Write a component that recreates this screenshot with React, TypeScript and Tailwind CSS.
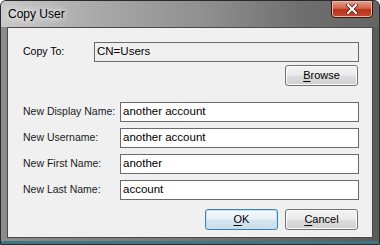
import React from 'react';

const font = { fontFamily: '"Liberation Sans", Arial, sans-serif' };

const Mn = ({ c, rest }: { c: string; rest: string }) => (
  <span>
    <span className="underline underline-offset-2">{c}</span>
    {rest}
  </span>
);

const Button = ({ children, primary }: { children: React.ReactNode; primary?: boolean }) => (
  <div
    className={
      'w-[73px] h-[21px] rounded-[3px] border flex items-center justify-center text-[11px] text-black ' +
      (primary
        ? 'border-[#3c7fb1] shadow-[inset_0_0_0_1px_#bfe4f7] bg-[linear-gradient(#f4f9fc_0%,#e8f1f7_48%,#d6e6f1_52%,#cbdce8_100%)]'
        : 'border-[#707070] shadow-[inset_0_0_0_1px_#fcfcfc] bg-[linear-gradient(#f2f2f2_0%,#ebebeb_48%,#dddddd_52%,#cfcfcf_100%)]')
    }
  >
    {children}
  </div>
);

const Field = ({ value, readOnly }: { value: string; readOnly?: boolean }) => (
  <div
    className={
      'flex-1 h-[20px] border border-[#6a6a6a] flex items-center pl-[2px] text-[11.5px] text-black ' +
      (readOnly ? 'bg-[#f0f0f0]' : 'bg-white')
    }
  >
    {value}
  </div>
);

const rows = [
  { label: 'New Display Name:', value: 'another account' },
  { label: 'New Username:', value: 'another account' },
  { label: 'New First Name:', value: 'another' },
  { label: 'New Last Name:', value: 'account' },
];

export default function App() {
  return (
    <div
      style={font}
      className="w-[380px] h-[245px] overflow-hidden bg-[linear-gradient(90deg,#8c8c8c_0%,#7a7a7a_40%,#6a6a6a_70%,#5b5b5b_100%)] rounded-t-[6px] border border-[#2a2a2a] flex flex-col relative"
    >
      {/* title bar */}
      <div className="h-[26px] flex items-center pl-[7px] bg-[linear-gradient(90deg,#c9c9c9_0%,#a9a9a9_25%,#8e8e8e_55%,#6e6e6e_80%,#656565_100%)]">
        <span className="text-[12px] text-black" style={{ textShadow: '0 0 6px #fff, 0 0 10px #fff' }}>
          Copy User
        </span>
      </div>
      <div className="absolute right-[6px] top-[-1px] w-[42px] h-[18px] rounded-b-[4px] border border-[#3b1410] bg-[linear-gradient(#e8a190_0%,#d0644e_45%,#b8331b_55%,#c5492e_100%)] shadow-[inset_0_0_0_1px_#f0b8a8] flex items-center justify-center">
        <svg width="12" height="10" viewBox="0 0 12 10">
          <path d="M2 1 L10 9 M10 1 L2 9" stroke="#3a1a14" strokeWidth="3.4" strokeLinecap="square" />
          <path d="M2 1 L10 9 M10 1 L2 9" stroke="#ffffff" strokeWidth="2" strokeLinecap="square" />
        </svg>
      </div>

      {/* client area */}
      <div className="flex-1 mx-[6px] mb-[6px] border border-[#4a4a4a] bg-[#f0f0f0] pl-[15px] pr-[13px] flex flex-col text-[10.5px] text-black">
        <div className="flex items-center mt-[14px]">
          <span className="w-[71px] shrink-0 whitespace-nowrap">Copy To:</span>
          <Field value="CN=Users" readOnly />
        </div>
        <div className="flex justify-end mt-[3px] pr-[1px]">
          <Button>
            <Mn c="B" rest="rowse" />
          </Button>
        </div>
        <div className="flex flex-col gap-[6px] mt-[16px]">
          {rows.map((r) => (
            <div key={r.label} className="flex items-center">
              <span className="w-[97px] shrink-0 whitespace-nowrap text-[#1a1a1a]">{r.label}</span>
              <Field value={r.value} />
            </div>
          ))}
        </div>
        <div className="flex justify-end gap-[7px] mt-[9px] pr-[1px]">
          <Button primary>
            <Mn c="O" rest="K" />
          </Button>
          <Button>
            <Mn c="C" rest="ancel" />
          </Button>
        </div>
      </div>
      <div className="absolute left-0 right-0 bottom-0 h-[3px] bg-[#3f7585]" />
    </div>
  );
}
